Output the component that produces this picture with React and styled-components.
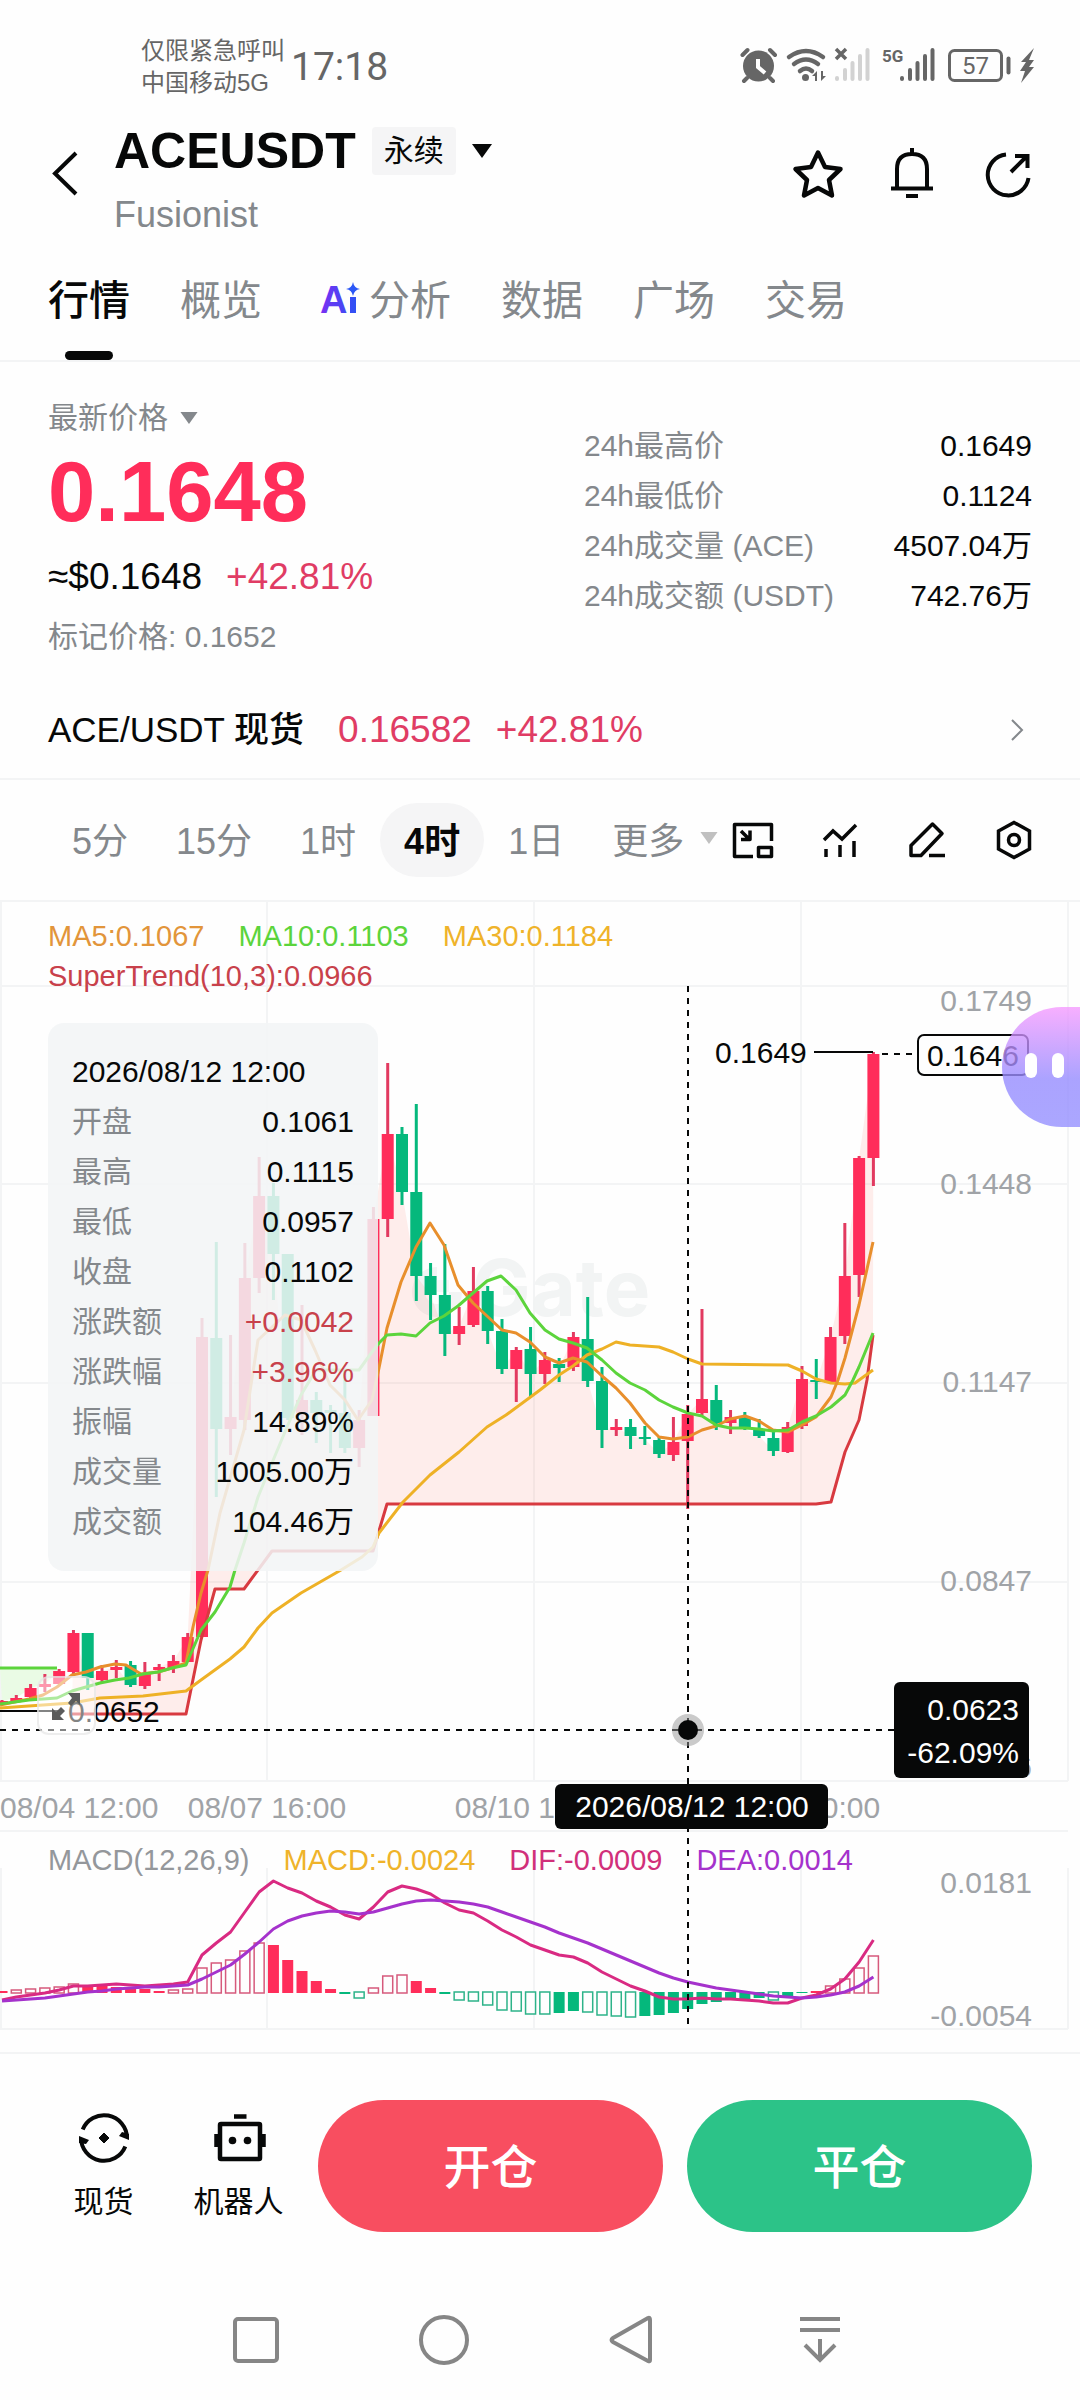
import { useState } from "react";
import styled, { createGlobalStyle } from "styled-components";

const GlobalStyle = createGlobalStyle`
  * {
    box-sizing: border-box;
  }
  body {
    margin: 0;
    background: #fefefe;
    color: #070808;
    font-family: "Liberation Sans", "Noto Sans CJK SC", sans-serif;
    font-size: 30px;
  }
  button {
    font: inherit;
    color: inherit;
    border: 0;
    padding: 0;
    background: none;
    cursor: pointer;
  }
  svg {
    display: block;
    flex: none;
    overflow: visible;
  }
`;

const RED = "#ff2d5a";
const GREEN = "#05b87c";
const GREY = "#84888c";

const Page = styled.div`
  display: flex;
  flex-direction: column;
  overflow-x: hidden;
`;

/* ---- status bar ---- */

const StatusBar = styled.div`
  display: flex;
  align-items: center;
  padding: 35px 44px 11px 141px;
  color: #666;

  > svg {
    margin-bottom: 4px;
  }
`;

const Carrier = styled.div`
  font-size: 24px;
  line-height: 32px;
`;

const Clock = styled.div`
  flex: 1;
  margin-left: 6px;
  font-family: Roboto, sans-serif;
  font-size: 39px;
  line-height: 60px;
`;

/* ---- header ---- */

const Header = styled.header`
  display: flex;
  align-items: flex-start;
  padding: 7px 48px 3px;
`;

const HeaderIcons = styled.div`
  display: flex;
  align-items: center;
  gap: 42px;
  height: 112px;
`;

const IconButton = styled.button`
  display: flex;
`;

const TitleBlock = styled.div`
  flex: 1;
  padding-left: 34px;
`;

const TitleRow = styled.div`
  display: flex;
  align-items: center;
  gap: 16px;
  height: 64px;
  padding-top: 4px;
  margin-bottom: 12px;
`;

const Title = styled.h1`
  margin: 0;
  font-size: 50px;
  line-height: 60px;
`;

const Badge = styled.span`
  padding: 0 12px;
  border-radius: 4px;
  background: #f5f5f6;
  line-height: 48px;
`;

const Subtitle = styled.div`
  color: ${GREY};
  font-size: 36px;
  line-height: 44px;
`;

/* ---- tabs ---- */

const Tabs = styled.nav`
  display: flex;
  gap: 50px;
  height: 122px;
  padding: 0 48px;
  border-bottom: 2px solid #f3f4f5;
`;

const Tab = styled.button`
  position: relative;
  display: flex;
  align-items: center;
  gap: 8px;
  padding-bottom: 6px;
  font-size: 41px;
  font-weight: ${(p) => (p.$active ? 500 : 400)};
  color: ${(p) => (p.$active ? "#070808" : GREY)};

  > svg {
    margin: 4px 0 0 8px;
  }

  &::after {
    content: "";
    display: ${(p) => (p.$active ? "block" : "none")};
    position: absolute;
    left: 50%;
    bottom: 0;
    width: 48px;
    height: 9px;
    margin-left: -24px;
    border-radius: 5px;
    background: #070808;
  }
`;

/* ---- price summary ---- */

const Summary = styled.section`
  display: flex;
  justify-content: space-between;
  padding: 36px 48px 16px;
`;

const PriceLabel = styled.button`
  display: flex;
  align-items: center;
  gap: 12px;
  color: ${GREY};
  line-height: 40px;
`;

const LastPrice = styled.div`
  color: ${RED};
  font-size: 85px;
  font-weight: 700;
  line-height: 108px;
`;

const SubPrice = styled.div`
  display: flex;
  gap: 24px;
  font-size: 37px;
  line-height: 62px;
`;

const Up = styled.span`
  color: #e03c64;
`;

const MarkPrice = styled.div`
  color: ${GREY};
  line-height: 58px;
`;

const Stats = styled.dl`
  width: 448px;
  margin: 23px 0 0;
`;

const StatRow = styled.div`
  display: flex;
  justify-content: space-between;
  line-height: 50px;

  dt {
    color: ${GREY};
  }
  dd {
    margin: 0;
  }
`;

const SpotLink = styled.a`
  display: flex;
  align-items: center;
  gap: 24px;
  height: 98px;
  padding: 0 48px;
  border-bottom: 2px solid #f3f4f5;
  color: inherit;
  text-decoration: none;
  font-size: 37px;

  svg {
    margin-left: auto;
  }
`;

const SpotName = styled.span`
  margin-right: 10px;
  font-size: 35px;
  line-height: 50px;
  font-weight: 500;
`;

/* ---- timeframe bar ---- */

const FrameBar = styled.div`
  display: flex;
  align-items: center;
  height: 122px;
  padding: 0 48px;
  border-bottom: 2px solid #f3f4f5;
`;

const Frame = styled.button`
  height: 74px;
  padding: 0 24px 4px;
  border-radius: 37px;
  font-size: 36px;
  color: ${(p) => (p.$active ? "#070808" : GREY)};
  background: ${(p) => (p.$active ? "#f5f5f6" : "none")};
  font-weight: ${(p) => (p.$active ? 700 : 400)};
`;

const MoreFrame = styled(Frame)`
  display: flex;
  align-items: center;
  gap: 16px;
  padding-right: 0;
`;

const FrameTools = styled.div`
  display: flex;
  gap: 40px;
  margin-left: auto;
`;

/* ---- chart ---- */

const ChartArea = styled.section`
  position: relative;
  margin-bottom: 22px;

  > svg {
    width: 100%;
    height: auto;
  }
  text {
    font-size: 30px;
    fill: #a0a3a7;
  }
`;

const Legend = styled.div`
  position: absolute;
  left: 48px;
  top: ${(p) => p.$top}px;
  display: flex;
  flex-wrap: wrap;
  gap: 0 34px;
  width: 900px;
  font-size: 29px;
  line-height: 40px;
`;

const LegendItem = styled.span`
  color: ${(p) => p.$color};
`;

const Break = styled.span`
  flex-basis: 100%;
`;

const CandleTip = styled.div`
  position: absolute;
  left: 48px;
  top: 121px;
  width: 330px;
  padding: 24px;
  border-radius: 16px;
  background: rgba(242, 244, 246, 0.86);
  line-height: 50px;
`;

const TipRow = styled.div`
  display: flex;
  justify-content: space-between;
  color: ${(p) => (p.$up ? "#c8414b" : "#070808")};

  span:first-child {
    color: ${GREY};
  }
`;

const ExpandButton = styled.button`
  position: absolute;
  left: 37px;
  top: 774px;
  padding: 12px;
  border: 2px solid rgba(225, 225, 225, 0.6);
  border-radius: 12px;
  background: rgba(255, 255, 255, 0.5);
`;

const Assistant = styled.button`
  position: absolute;
  right: 0;
  top: 105px;
  display: flex;
  align-items: center;
  gap: 15px;
  width: 78px;
  height: 120px;
  padding: 0 0 4px 23px;
  border-radius: 60px 0 0 60px;
  background: linear-gradient(
    rgba(245, 150, 255, 0.76),
    rgba(150, 140, 255, 0.8) 60%,
    rgba(150, 145, 255, 0.8)
  );
`;

const Eye = styled.i`
  width: 12px;
  height: 25px;
  border-radius: 6px;
  background: #fff;
`;

/* ---- bottom ---- */

const ActionBar = styled.footer`
  display: flex;
  gap: 24px;
  padding: 46px 48px 48px;
  border-top: 2px solid #f3f4f5;
`;

const SideAction = styled.button`
  display: flex;
  flex-direction: column;
  align-items: center;
  gap: 19px;
  width: 111px;
  height: 132px;
  padding-top: 13px;
  line-height: 40px;
`;

const TradeButton = styled.button`
  flex: 1;
  height: 132px;
  padding-bottom: 6px;
  border-radius: 66px;
  background: ${(p) => p.$color};
  color: #fff;
  font-size: 47px;
  font-weight: 500;
`;

const SystemNav = styled.nav`
  display: flex;
  justify-content: center;
  height: 120px;
  padding-right: 4px;

  button {
    display: flex;
    align-items: center;
    justify-content: center;
    width: 188px;
  }
`;

/* ---- chart data, oldest candle first: body top, body bottom, high, low, up ---- */

const CANDLES = [
  [1701, 1703, 1700, 1704, 1],
  [1698, 1702, 1695, 1703, 1],
  [1688, 1697, 1684, 1699, 1],
  [1684, 1687, 1674, 1692, 1],
  [1671, 1684, 1669, 1684, 1],
  [1633, 1672, 1630, 1674, 1],
  [1633, 1678, 1633, 1690, 0],
  [1671, 1680, 1665, 1682, 1],
  [1667, 1670, 1660, 1678, 1],
  [1665, 1685, 1661, 1687, 0],
  [1673, 1686, 1662, 1689, 1],
  [1667, 1670, 1664, 1681, 1],
  [1661, 1668, 1655, 1673, 1],
  [1637, 1662, 1633, 1662, 1],
  [1337, 1637, 1318, 1637, 1],
  [1338, 1429, 1242, 1497, 0],
  [1417, 1429, 1335, 1455, 1],
  [1278, 1420, 1243, 1430, 1],
  [1196, 1278, 1157, 1293, 1],
  [1196, 1254, 1183, 1300, 0],
  [1254, 1418, 1254, 1420, 0],
  [1400, 1413, 1305, 1435, 1],
  [1400, 1413, 1392, 1443, 0],
  [1410, 1413, 1405, 1453, 0],
  [1413, 1448, 1370, 1453, 0],
  [1420, 1448, 1410, 1467, 1],
  [1219, 1416, 1207, 1416, 1],
  [1134, 1219, 1063, 1237, 1],
  [1134, 1192, 1127, 1205, 0],
  [1192, 1276, 1104, 1301, 0],
  [1276, 1295, 1263, 1320, 0],
  [1295, 1334, 1244, 1356, 0],
  [1326, 1334, 1307, 1345, 1],
  [1291, 1325, 1267, 1327, 1],
  [1291, 1331, 1286, 1344, 0],
  [1331, 1369, 1319, 1374, 0],
  [1350, 1369, 1347, 1402, 1],
  [1349, 1374, 1327, 1397, 0],
  [1360, 1374, 1352, 1384, 1],
  [1364, 1368, 1358, 1382, 0],
  [1337, 1367, 1332, 1371, 1],
  [1339, 1381, 1297, 1387, 0],
  [1381, 1430, 1367, 1448, 0],
  [1427, 1430, 1419, 1436, 1],
  [1427, 1436, 1419, 1449, 0],
  [1437, 1439, 1426, 1445, 0],
  [1440, 1454, 1437, 1458, 0],
  [1442, 1455, 1417, 1461, 1],
  [1414, 1441, 1405, 1509, 1],
  [1399, 1413, 1309, 1415, 1],
  [1400, 1423, 1385, 1430, 0],
  [1417, 1423, 1410, 1434, 1],
  [1418, 1429, 1412, 1430, 0],
  [1430, 1436, 1419, 1438, 0],
  [1438, 1451, 1430, 1456, 0],
  [1427, 1452, 1422, 1453, 1],
  [1379, 1426, 1366, 1429, 1],
  [1380, 1382, 1359, 1399, 0],
  [1337, 1383, 1327, 1383, 1],
  [1276, 1336, 1223, 1344, 1],
  [1158, 1275, 1156, 1297, 1],
  [1054, 1158, 1052, 1186, 1],
];

// bar heights over the zero line
const HIST = [
  2, 3, 4, 5, 6, 9, 7, 7, 6, 5, 4, 2, 3, 4, 25, 30, 33, 42, 50, 48, 33, 22, 12,
  4, -2, -6, 5, 17, 18, 12, 5, -2, -8, -9, -13, -18, -19, -22, -22, -21, -19,
  -20, -23, -24, -25, -24, -23, -21, -17, -12, -10, -8, -7, -6, -8, -4, -1, 2,
  7, 14, 25, 37,
];

const DIF = [
  2000, 1997, 1995, 1993, 1990, 1986, 1986, 1985, 1984, 1985, 1986, 1985, 1984,
  1982, 1955, 1943, 1932, 1912, 1892, 1881, 1888, 1893, 1901, 1907, 1915, 1919,
  1907, 1892, 1886, 1889, 1894, 1903, 1910, 1913, 1921, 1930, 1937, 1945, 1950,
  1955, 1957, 1963, 1972, 1979, 1986, 1991, 1997, 1999, 1999, 1998, 1999, 1999,
  2000, 2001, 2003, 2003, 1998, 1995, 1989, 1979, 1962, 1940,
];

const DEA = [
  2001, 2000, 1999, 1998, 1996, 1994, 1992, 1991, 1989, 1988, 1987, 1987, 1986,
  1985, 1979, 1972, 1965, 1954, 1942, 1929, 1921, 1916, 1913, 1911, 1912, 1914,
  1912, 1908, 1904, 1901, 1900, 1901, 1902, 1904, 1907, 1912, 1917, 1922, 1927,
  1933, 1938, 1943, 1949, 1955, 1961, 1967, 1973, 1978, 1982, 1985, 1988, 1990,
  1992, 1994, 1996, 1997, 1998, 1997, 1995, 1992, 1986, 1977,
];

const MA5 =
  "0,1705 29,1699 43,1695 57,1687 72,1675 86,1672 100,1667 115,1664 126,1665 141,1674 158,1672 172,1668 186,1663 193,1627 201,1593 208,1570 220,1513 244,1430 258,1340 285,1315 301,1320 315,1350 330,1385 345,1400 358,1420 372,1400 379,1368 387,1328 401,1282 416,1247 430,1223 444,1245 458,1285 473,1303 487,1316 502,1330 516,1333 530,1342 545,1357 559,1363 573,1358 587,1362 602,1376 616,1388 630,1403 645,1423 659,1437 673,1439 688,1437 702,1430 716,1426 730,1419 745,1416 759,1421 773,1430 788,1432 802,1425 816,1417 831,1397 838,1380 845,1358 859,1305 873,1242";
const MA10 =
  "0,1704 29,1700 43,1699 57,1698 72,1691 86,1687 100,1683 115,1680 129,1678 143,1674 158,1672 172,1668 186,1665 201,1630 215,1612 230,1587 235,1570 244,1543 258,1497 272,1463 287,1427 301,1395 316,1370 345,1370 359,1370 372,1352 379,1343 387,1335 401,1334 416,1336 430,1323 444,1316 458,1306 473,1293 487,1281 501,1276 516,1290 530,1313 545,1330 559,1339 573,1343 587,1348 602,1360 616,1373 630,1383 645,1390 659,1400 673,1407 688,1413 702,1416 716,1425 730,1428 745,1428 759,1429 773,1431 788,1430 802,1422 816,1416 831,1407 845,1395 853,1380 859,1367 873,1333";
const MA30 =
  "0,1708 43,1705 72,1703 100,1698 143,1696 186,1691 201,1680 230,1659 244,1647 258,1628 272,1613 301,1593 341,1570 362,1557 373,1547 379,1533 403,1502 430,1475 459,1452 487,1427 506,1415 540,1390 559,1375 573,1366 587,1355 602,1349 616,1342 630,1345 659,1347 673,1352 688,1359 702,1364 788,1365 802,1371 816,1379 831,1383 845,1384 855,1383 873,1370";
const TREND =
  "72,1714 186,1714 201,1640 215,1589 244,1589 272,1551 373,1551 387,1504 816,1504 831,1502 845,1452 859,1420 867,1380 873,1335";

const STEP = 14.285;
const candleX = (i) => 873.4 - (CANDLES.length - 1 - i) * STEP;
const toPoints = (ys) => ys.map((y, i) => `${candleX(i)},${y}`).join(" ");
const closeOf = (c) => (c[4] ? c[0] : c[1]);

const closes = CANDLES.map((c, i) => `${candleX(i)},${closeOf(c)}`);
const upFill = `${closes.slice(5).join(" ")} ${TREND.split(" ").reverse().join(" ")}`;
const downFill = `${closes.slice(0, 5).join(" ")} 57,1668 0,1668`;

const Candle = ({ c, x }) => {
  const color = c[4] ? RED : GREEN;
  return (
    <g fill={color}>
      <rect x={x - 1.5} y={c[2]} width="3" height={c[3] - c[2]} fill={c[4] ? "#e23a60" : GREEN} />
      <rect x={x - 6} y={c[0]} width="12" height={c[1] - c[0]} />
    </g>
  );
};

// growing bars are outlined, shrinking ones are filled
const HistBar = ({ i }) => {
  const h = HIST[i];
  const size = Math.abs(h);
  const prev = i ? HIST[i - 1] : 3;
  const growing = h > 0 ? h > prev : h <= prev;
  const x = candleX(i);
  const y = h > 0 ? 1993 - h : 1992;
  if (growing && size > 2)
    return (
      <rect
        x={x - 5}
        y={y}
        width="10"
        height={size}
        fill="#fefefe"
        stroke={h > 0 ? "#d65a7c" : "#2db389"}
        strokeWidth="1.5"
      />
    );
  return <rect x={x - 5.5} y={y} width="11" height={size} fill={h > 0 ? RED : GREEN} />;
};

const Chart = () => (
  <svg viewBox="0 902 1080 1128" aria-label="ACEUSDT K线">
    <g stroke="#f3f4f5" strokeWidth="2">
      {[1, 267, 534, 801, 1068].map((x) => (
        <g key={x}>
          <path d={`M${x} 902V1781`} />
          <path d={`M${x} 1868V2029`} />
        </g>
      ))}
      {[986, 1184, 1383, 1582, 1781, 1831, 2029].map((y) => (
        <path key={y} d={`M0 ${y}H1068`} />
      ))}
    </g>

    {/* watermark */}
    <g opacity="0.9">
      <path d="M437 1267a25 25 0 1 0 25 25h-13a12 12 0 1 1-12-12z" fill="#f1f3f3" />
      <path d="M437 1280h12v12h-12z" fill="#f5f7f7" />
      <text x="472" y="1316" style={{ fontFamily: "Inter", fontSize: 78, fontWeight: 700, fill: "#f1f3f3" }}>
        Gate
      </text>
    </g>

    <polygon points={upFill} fill="rgba(255, 60, 40, 0.085)" />
    <polygon points={downFill} fill="#eafbe5" />

    {CANDLES.map((c, i) => (
      <Candle key={i} c={c} x={candleX(i)} />
    ))}

    <g fill="none" strokeWidth="3" strokeLinejoin="round">
      <path d="M0 1668H57" stroke="#5cd43c" />
      <polyline points={TREND} stroke="#d83a40" />
      <polyline points={MA30} stroke="#eeb126" />
      <polyline points={MA5} stroke="#e88f2c" />
      <polyline points={MA10} stroke="#5cd43c" />
    </g>

    {HIST.map((h, i) => (
      <HistBar key={i} i={i} />
    ))}
    <g fill="none" strokeWidth="3" strokeLinejoin="round">
      <polyline points={toPoints(DIF)} stroke="#d92a82" />
      <polyline points={toPoints(DEA)} stroke="#a532cc" />
    </g>

    {/* axis labels */}
    <g textAnchor="end">
      <text x="1032" y="1011">0.1749</text>
      <text x="1032" y="1194">0.1448</text>
      <text x="1032" y="1392">0.1147</text>
      <text x="1032" y="1591">0.0847</text>
      <text x="1032" y="1777">0.0546</text>
      <text x="1032" y="1893">0.0181</text>
      <text x="1032" y="2026">-0.0054</text>
    </g>
    <text x="0" y="1818">08/04 12:00</text>
    <g textAnchor="middle">
      <text x="267" y="1818">08/07 16:00</text>
      <text x="534" y="1818">08/10 16:00</text>
      <text x="801" y="1818">08/13 20:00</text>
    </g>

    {/* highest, lowest and current price */}
    <g stroke="#070808" strokeWidth="2" fill="none">
      <path d="M814 1052H873" />
      <path d="M0 1711H60" />
      <path d="M882 1054H914" strokeDasharray="6 6" />
      <rect x="918" y="1035" width="110" height="40" rx="6" />
    </g>
    <text x="715" y="1063" style={{ fill: "#070808" }}>0.1649</text>
    <text x="68" y="1722" style={{ fill: "#070808" }}>0.0652</text>
    <text x="973" y="1066" textAnchor="middle" style={{ fill: "#070808" }}>0.1646</text>

    {/* crosshair */}
    <g stroke="#070808" strokeWidth="2" strokeDasharray="6 6">
      <path d="M688 986V2029" />
      <path d="M0 1730H894" />
    </g>
    <circle cx="688" cy="1730" r="16" fill="rgba(150, 150, 150, 0.5)" />
    <circle cx="688" cy="1730" r="10" fill="#070808" />
    <rect x="894" y="1682" width="135" height="96" rx="6" fill="#070808" />
    <text x="1019" y="1720" textAnchor="end" style={{ fill: "#fff" }}>0.0623</text>
    <text x="1019" y="1763" textAnchor="end" style={{ fill: "#fff" }}>-62.09%</text>
    <rect x="555" y="1784" width="273" height="45" rx="6" fill="#070808" />
    <text x="692" y="1817" textAnchor="middle" style={{ fill: "#fff" }}>2026/08/12 12:00</text>
  </svg>
);

/* ---- icons ---- */

const Caret = ({ w = 20, h = 14, color = "#070808" }) => (
  <svg width={w} height={h} viewBox="0 0 20 14">
    <path d="M0 0H20L10 14Z" fill={color} />
  </svg>
);

const StatusIcons = () => (
  <svg width="296" height="36" viewBox="740 47 296 36" fill="#666">
    {/* alarm */}
    <circle cx="758.5" cy="66" r="15.5" />
    <path
      d="M747 78l-3 3M770 78l3 3M742.5 55l5-5M775 55l-5-5"
      stroke="#666"
      strokeWidth="4"
      strokeLinecap="round"
    />
    <path d="M758 59v8l7 6" stroke="#fefefe" strokeWidth="4" fill="none" />
    {/* wifi */}
    <g fill="none" stroke="#666" strokeWidth="4.5" strokeLinecap="round">
      <path d="M789 57q17-12 34 0" />
      <path d="M794 64q12-9 24 0" />
      <path d="M800 71q6-5 12 0" />
    </g>
    <circle cx="805.5" cy="77.5" r="3.5" />
    <path d="M812 76l5-5v10h-2v-5zM821 71v10l5-5h-3v-5z" />
    {/* signal 1 */}
    <path d="M836 49l10 10M846 49l-10 10" stroke="#666" strokeWidth="3.5" />
    <g stroke="#d2d2d2" strokeWidth="4" strokeLinecap="round">
      <path d="M837 78v1M845 70v9M852.5 63v16M860 56v23M867.5 50v29" />
    </g>
    {/* signal 2 */}
    <text x="882" y="62" fontSize="17" fontWeight="700" style={{ fontFamily: "Roboto" }}>
      5G
    </text>
    <g stroke="#666" strokeWidth="4" strokeLinecap="round">
      <path d="M902 78v1M910 70v9M917.5 63v16M925 56v23M932.5 50v29" />
    </g>
    {/* battery */}
    <rect x="949.5" y="50.5" width="52" height="30" rx="5" fill="none" stroke="#666" strokeWidth="3" />
    <path d="M1008.5 58.5v14" stroke="#666" strokeWidth="4" strokeLinecap="round" />
    <text x="975.5" y="74" fontSize="24" textAnchor="middle" style={{ fontFamily: "Roboto" }}>
      57
    </text>
    <path d="M1034 48l-13 14h5l-6 9h5l-4 12 13-16h-5l5-7h-5z" />
  </svg>
);

const BackIcon = () => (
  <svg width="32" height="48" viewBox="48 149 32 48" fill="none" stroke="#070808" strokeWidth="4">
    <path d="M76 153L55 173.5L76 194" />
  </svg>
);

const StarIcon = () => (
  <svg width="52" height="52" viewBox="790 147 52 52" fill="none" stroke="#070808" strokeWidth="4.5" strokeLinejoin="round">
    <path d="M816 152.5l7 14.5 15.5 2-11.500 11 3 15.5-14-7.500-14 7.500 3-15.500-11.500-11 15.500-2z" />
  </svg>
);

const BellIcon = () => (
  <svg width="52" height="52" viewBox="886 147 52 52" fill="none" stroke="#070808" strokeWidth="4">
    <path d="M897 187v-18q0-15 15-15t15 15v18M891 188.5h42M912 148v6M906 196h12" />
  </svg>
);

const ShareIcon = () => (
  <svg width="52" height="52" viewBox="980 147 52 52" fill="none" stroke="#070808" strokeWidth="4">
    <path d="M1006 154.5A20.5 20.5 0 1 0 1028.5 178" />
    <path d="M1011 172l16-16M1015 156h12.5v12" />
  </svg>
);

const AiIcon = () => (
  <svg width="41" height="36" viewBox="0 0 41 36">
    <defs>
      <linearGradient id="ai" x1="0" y1="0" x2="41" y2="0" gradientUnits="userSpaceOnUse">
        <stop offset="0" stopColor="#7b2ff2" />
        <stop offset="1" stopColor="#2357f5" />
      </linearGradient>
    </defs>
    <text x="0" y="32" fontSize="38" fontWeight="700" fill="url(#ai)" style={{ fontFamily: "Liberation Sans" }}>
      A
    </text>
    <path d="M30 16h6v16h-6z" fill="url(#ai)" />
    <path d="M33 1q1 6 7 7q-6 1-7 7q-1-6-7-7q6-1 7-7z" fill="#2b57f6" />
  </svg>
);

const PipIcon = () => (
  <svg width="46" height="42" viewBox="728 819 46 42" fill="none" stroke="#070808" strokeWidth="3.5" strokeLinejoin="round">
    <path d="M753 856.5h-18.5v-32h37V841" />
    <rect x="758.5" y="847.5" width="13" height="9" />
    <path d="M741 831l8 8M741 839.5h9v-9" />
  </svg>
);

const IndicatorIcon = () => (
  <svg width="46" height="42" viewBox="814 819 46 42" fill="none" stroke="#070808" strokeWidth="3.5">
    <path d="M824 840l9-9 9 8 14-14M826 849v8M840 845v12M854 841v16" />
  </svg>
);

const PencilIcon = () => (
  <svg width="46" height="42" viewBox="900 819 46 42" fill="none" stroke="#070808" strokeWidth="3.5" strokeLinejoin="round">
    <path d="M911 855.5v-10L932.5 824l9.5 9.5-21 22zM929 855.5h16" />
  </svg>
);

const HexIcon = () => (
  <svg width="46" height="42" viewBox="986 820 46 42" fill="none" stroke="#070808" strokeWidth="3.5">
    <path d="M1014 823.5l15.5 8.5v18L1014 858.5 998.5 850v-18z" />
    <circle cx="1014" cy="841" r="5.5" />
  </svg>
);

const ExpandIcon = () => (
  <svg width="31" height="31" viewBox="0 0 31 31" fill="#5b5b5b">
    <path d="M17 3h12v12l-4-4-5 5-3-3 4-5zM1 18l4 4 5-5 4 4-5 5 4 4H1z" />
  </svg>
);

const SwapIcon = () => (
  <svg width="50" height="50" viewBox="78 2113 50 50" fill="none" stroke="#070808" strokeWidth="4">
    <path d="M81.7 2129.5A23 23 0 0 1 126 2138" />
    <path d="M124.3 2146.5A23 23 0 0 1 80 2138" />
    <path d="M118 2136l3-4 7 2v6zM78 2136l10 4-3 4-7-1z" fill="#070808" stroke="none" />
    <path d="M103 2133l5 5-5 5-5-5z" fill="#070808" strokeWidth="1" />
  </svg>
);

const RobotIcon = () => (
  <svg width="50" height="50" viewBox="212 2113 50 50" fill="none" stroke="#070808" strokeWidth="4.5">
    <rect x="218" y="2124" width="40" height="35" rx="1" />
    <path d="M232 2116.5h12.500M214.500 2134v13M261.500 2134v13" />
    <circle cx="230.500" cy="2140.500" r="3.800" fill="#070808" stroke="none" />
    <circle cx="245.500" cy="2140.500" r="3.800" fill="#070808" stroke="none" />
  </svg>
);

const navIcons = [
  ["最近任务", <rect x="4" y="4" width="42" height="42" rx="3" />],
  ["主屏幕", <circle cx="25" cy="25" r="23" />],
  ["返回", <path d="M43 5v40q0 2-2 1L6 27q-3-2 0-4L41 3q2-1 2 2z" />],
  ["通知", <path d="M5 4h40M5 15h40M25 24v22M10 30l15 15 15-15" />],
];

const tabs = ["行情", "概览", "分析", "数据", "广场", "交易"];
const frames = ["5分", "15分", "1时", "4时", "1日"];

const stats = [
  ["24h最高价", "0.1649"],
  ["24h最低价", "0.1124"],
  ["24h成交量 (ACE)", "4507.04万"],
  ["24h成交额 (USDT)", "742.76万"],
];

const tip = [
  ["开盘", "0.1061"],
  ["最高", "0.1115"],
  ["最低", "0.0957"],
  ["收盘", "0.1102"],
  ["涨跌额", "+0.0042", true],
  ["涨跌幅", "+3.96%", true],
  ["振幅", "14.89%"],
  ["成交量", "1005.00万"],
  ["成交额", "104.46万"],
];

export default function App() {
  const [tab, setTab] = useState("行情");
  const [frame, setFrame] = useState("4时");

  return (
    <Page>
      <GlobalStyle />
      <StatusBar>
        <Carrier>
          <div>仅限紧急呼叫</div>
          <div>中国移动5G</div>
        </Carrier>
        <Clock>17:18</Clock>
        <StatusIcons />
      </StatusBar>

      <Header>
        <HeaderIcons>
          <IconButton aria-label="返回">
            <BackIcon />
          </IconButton>
        </HeaderIcons>
        <TitleBlock>
          <TitleRow>
            <Title>ACEUSDT</Title>
            <Badge>永续</Badge>
            <IconButton aria-label="切换合约">
              <Caret />
            </IconButton>
          </TitleRow>
          <Subtitle>Fusionist</Subtitle>
        </TitleBlock>
        <HeaderIcons>
          <IconButton aria-label="收藏">
            <StarIcon />
          </IconButton>
          <IconButton aria-label="提醒">
            <BellIcon />
          </IconButton>
          <IconButton aria-label="分享">
            <ShareIcon />
          </IconButton>
        </HeaderIcons>
      </Header>

      <Tabs>
        {tabs.map((t) => (
          <Tab key={t} $active={t === tab} onClick={() => setTab(t)}>
            {t === "分析" && <AiIcon />}
            {t}
          </Tab>
        ))}
      </Tabs>

      <Summary>
        <div>
          <PriceLabel>
            最新价格
            <Caret w={18} h={12} color={GREY} />
          </PriceLabel>
          <LastPrice>0.1648</LastPrice>
          <SubPrice>
            <span>≈$0.1648</span>
            <Up>+42.81%</Up>
          </SubPrice>
          <MarkPrice>标记价格: 0.1652</MarkPrice>
        </div>
        <Stats>
          {stats.map(([label, value]) => (
            <StatRow key={label}>
              <dt>{label}</dt>
              <dd>{value}</dd>
            </StatRow>
          ))}
        </Stats>
      </Summary>

      <SpotLink href="#spot">
        <SpotName>ACE/USDT 现货</SpotName>
        <Up>0.16582</Up>
        <Up>+42.81%</Up>
        <svg width="22" height="26" viewBox="0 0 22 26" fill="none" stroke={GREY} strokeWidth="2">
          <path d="M2 3l10 10L2 23" />
        </svg>
      </SpotLink>

      <FrameBar>
        {frames.map((f) => (
          <Frame key={f} $active={f === frame} onClick={() => setFrame(f)}>
            {f}
          </Frame>
        ))}
        <MoreFrame>
          更多
          <Caret w={18} h={12} color="#c0c0c0" />
        </MoreFrame>
        <FrameTools>
          <IconButton aria-label="画中画">
            <PipIcon />
          </IconButton>
          <IconButton aria-label="指标">
            <IndicatorIcon />
          </IconButton>
          <IconButton aria-label="画线">
            <PencilIcon />
          </IconButton>
          <IconButton aria-label="设置">
            <HexIcon />
          </IconButton>
        </FrameTools>
      </FrameBar>

      <ChartArea>
        <Chart />
        <Legend $top={14}>
          <LegendItem $color="#e2953a">MA5:0.1067</LegendItem>
          <LegendItem $color="#5cd43c">MA10:0.1103</LegendItem>
          <LegendItem $color="#efb32a">MA30:0.1184</LegendItem>
          <Break />
          <LegendItem $color="#c8414b">SuperTrend(10,3):0.0966</LegendItem>
        </Legend>
        <Legend $top={938}>
          <LegendItem $color="#94979b">MACD(12,26,9)</LegendItem>
          <LegendItem $color="#efb32a">MACD:-0.0024</LegendItem>
          <LegendItem $color="#d1307a">DIF:-0.0009</LegendItem>
          <LegendItem $color="#a532cc">DEA:0.0014</LegendItem>
        </Legend>
        <CandleTip>
          <div>2026/08/12 12:00</div>
          {tip.map(([label, value, up]) => (
            <TipRow key={label} $up={up}>
              <span>{label}</span>
              <span>{value}</span>
            </TipRow>
          ))}
        </CandleTip>
        <ExpandButton aria-label="全屏">
          <ExpandIcon />
        </ExpandButton>
        <Assistant aria-label="助手">
          <Eye />
          <Eye />
        </Assistant>
      </ChartArea>

      <ActionBar>
        <SideAction>
          <SwapIcon />
          现货
        </SideAction>
        <SideAction>
          <RobotIcon />
          机器人
        </SideAction>
        <TradeButton $color="#f84e60">开仓</TradeButton>
        <TradeButton $color="#2cc388">平仓</TradeButton>
      </ActionBar>

      <SystemNav>
        {navIcons.map(([label, shape]) => (
          <button key={label} aria-label={label}>
            <svg width="50" height="50" viewBox="0 0 50 50" fill="none" stroke="#868686" strokeWidth="4">
              {shape}
            </svg>
          </button>
        ))}
      </SystemNav>
    </Page>
  );
}
